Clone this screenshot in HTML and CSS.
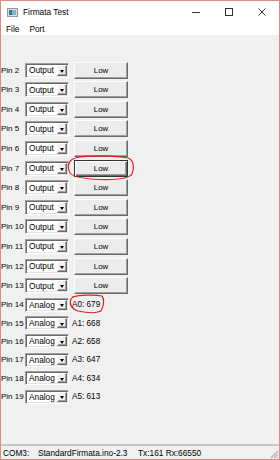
FILE: index.html
```html
<!DOCTYPE html>
<html>
<head>
<meta charset="utf-8">
<link rel="stylesheet" href="styles.css">
</head>
<body>
<div class="window">
  <div class="titlebar">
    <svg class="appicon" width="11" height="9" viewBox="0 0 11 9">
      <rect x="0.5" y="0.5" width="10" height="8" fill="#d6dfe6" stroke="#8c9aa6"/>
      <rect x="2" y="2" width="3" height="5" fill="#2f7f6e"/>
      <rect x="5" y="2" width="4" height="5" fill="#7fb1d9"/>
    </svg>
    <span class="title">Firmata Test</span>
    <div class="controls">
      <svg class="ctl" width="12" height="10" viewBox="0 0 12 10"><path d="M2 4.5H10" stroke="#333" stroke-width="1"/></svg>
      <svg class="ctl" width="12" height="10" viewBox="0 0 12 10"><rect x="2.5" y="0.5" width="7" height="7" fill="none" stroke="#333" stroke-width="1"/></svg>
      <svg class="ctl" width="12" height="10" viewBox="0 0 12 10"><path d="M2.5 0.5L9.5 7.5M9.5 0.5L2.5 7.5" stroke="#333" stroke-width="1"/></svg>
    </div>
  </div>
  <div class="menubar">
    <span class="menuitem">File</span>
    <span class="menuitem">Port</span>
  </div>
  <div class="content">
    <div class="row digital"><span class="pin">Pin 2</span><div class="select"><span class="val">Output</span><span class="arrow"></span></div><div class="button">Low</div></div>
    <div class="row digital"><span class="pin">Pin 3</span><div class="select"><span class="val">Output</span><span class="arrow"></span></div><div class="button">Low</div></div>
    <div class="row digital"><span class="pin">Pin 4</span><div class="select"><span class="val">Output</span><span class="arrow"></span></div><div class="button">Low</div></div>
    <div class="row digital"><span class="pin">Pin 5</span><div class="select"><span class="val">Output</span><span class="arrow"></span></div><div class="button">Low</div></div>
    <div class="row digital"><span class="pin">Pin 6</span><div class="select"><span class="val">Output</span><span class="arrow"></span></div><div class="button">Low</div></div>
    <div class="row digital"><span class="pin">Pin 7</span><div class="select"><span class="val">Output</span><span class="arrow"></span></div><div class="button focused">Low</div></div>
    <div class="row digital"><span class="pin">Pin 8</span><div class="select"><span class="val">Output</span><span class="arrow"></span></div><div class="button">Low</div></div>
    <div class="row digital"><span class="pin">Pin 9</span><div class="select"><span class="val">Output</span><span class="arrow"></span></div><div class="button">Low</div></div>
    <div class="row digital"><span class="pin">Pin 10</span><div class="select"><span class="val">Output</span><span class="arrow"></span></div><div class="button">Low</div></div>
    <div class="row digital"><span class="pin">Pin 11</span><div class="select"><span class="val">Output</span><span class="arrow"></span></div><div class="button">Low</div></div>
    <div class="row digital"><span class="pin">Pin 12</span><div class="select"><span class="val">Output</span><span class="arrow"></span></div><div class="button">Low</div></div>
    <div class="row digital"><span class="pin">Pin 13</span><div class="select"><span class="val">Output</span><span class="arrow"></span></div><div class="button">Low</div></div>
    <div class="row analog"><span class="pin">Pin 14</span><div class="select"><span class="val">Analog</span><span class="arrow"></span></div><span class="reading">A0: 679</span></div>
    <div class="row analog"><span class="pin">Pin 15</span><div class="select"><span class="val">Analog</span><span class="arrow"></span></div><span class="reading">A1: 668</span></div>
    <div class="row analog"><span class="pin">Pin 16</span><div class="select"><span class="val">Analog</span><span class="arrow"></span></div><span class="reading">A2: 658</span></div>
    <div class="row analog"><span class="pin">Pin 17</span><div class="select"><span class="val">Analog</span><span class="arrow"></span></div><span class="reading">A3: 647</span></div>
    <div class="row analog"><span class="pin">Pin 18</span><div class="select"><span class="val">Analog</span><span class="arrow"></span></div><span class="reading">A4: 634</span></div>
    <div class="row analog"><span class="pin">Pin 19</span><div class="select"><span class="val">Analog</span><span class="arrow"></span></div><span class="reading">A5: 613</span></div>
  </div>
  <div class="statusbar">
    <span class="panel p1">COM3:</span>
    <span class="panel p2">StandardFirmata.ino-2.3</span>
    <span class="panel p3">Tx:161 Rx:66550</span>
    <svg class="grip" width="10" height="10" viewBox="0 0 10 10">
      <path d="M9 2L2 9M9 5L5 9M9 8L8 9" stroke="#b5b5b5" stroke-width="1.2"/>
    </svg>
  </div>
  <svg class="annot" width="280" height="460" viewBox="0 0 280 460">
    <path d="M76 157.5C90 155 115 155.5 128 158C134 160 134.5 168 132 174C129 179 118 180 100 179.5C86 179 74 178 70 173C67 168 68 162 72 159.5C76 157 82 156.5 88 156" fill="none" stroke="#e0201c" stroke-width="1.2"/>
    <path d="M72 297C80 295 95 294.5 102 296C104.5 299 104 306 101 311C96 313.5 87 313 78 311C72 309 69.5 305 70.5 300C71.5 297 75 296 80 295.5" fill="none" stroke="#e0201c" stroke-width="1.2"/>
  </svg>
</div>
</body>
</html>
```

FILE: styles.css
```css
html, body {
  margin: 0;
  padding: 0;
  background: #fff;
}

body {
  font-family: "Liberation Sans", Arial, sans-serif;
  font-size: 8.2px;
  color: #000;
}

.window {
  position: relative;
  width: 280px;
  height: 460px;
  box-sizing: border-box;
  border: 1px solid #dc8c84;
  background: #f0f0f0;
  display: flex;
  flex-direction: column;
  overflow: hidden;
}

.titlebar {
  height: 21px;
  background: #fff;
  display: flex;
  align-items: center;
}

.appicon {
  margin-left: 6px;
  margin-top: 1px;
}

.title {
  margin-left: 5px;
  font-size: 8.3px;
}

.controls {
  margin-left: auto;
  display: flex;
  align-items: center;
  gap: 21px;
  margin-right: 11px;
  margin-top: 2px;
}

.ctl {
  display: block;
}

.menubar {
  height: 13px;
  background: #fff;
  display: flex;
  align-items: center;
  padding-left: 5px;
  gap: 10px;
  font-size: 8.3px;
}

.content {
  flex: 1;
  padding-top: 25.3px;
  display: flex;
  flex-direction: column;
}

.row {
  display: flex;
  align-items: center;
}

.row.digital {
  height: 19.6px;
}

.row.analog {
  height: 18.4px;
}

.pin {
  width: 24px;
  white-space: nowrap;
  font-size: 8px;
}

.select {
  width: 44px;
  height: 15px;
  box-sizing: border-box;
  background: #fff;
  border: 1px solid;
  border-color: #a0a0a0 #fff #fff #a0a0a0;
  box-shadow: inset 1px 1px 0 #696969, inset -1px -1px 0 #e3e3e3;
  display: flex;
  align-items: center;
  padding: 1px;
}

.row.analog .select {
  height: 14px;
}

.val {
  flex: 1;
  padding-left: 2px;
  font-size: 8.3px;
}

.arrow {
  width: 10px;
  height: 100%;
  box-sizing: border-box;
  background: #f0f0f0;
  border: 1px solid;
  border-color: #fff #696969 #696969 #fff;
  box-shadow: inset -1px -1px 0 #a0a0a0;
  position: relative;
}

.arrow::after {
  content: "";
  position: absolute;
  left: 2px;
  top: 4px;
  border-left: 2.5px solid transparent;
  border-right: 2.5px solid transparent;
  border-top: 3px solid #000;
}

.row.analog .arrow::after {
  top: 3.5px;
}

.button {
  margin-left: 5px;
  width: 54px;
  height: 17px;
  box-sizing: border-box;
  background: #ececec;
  border: 1px solid;
  border-color: #fff #696969 #696969 #fff;
  box-shadow: inset -1px -1px 0 #a0a0a0;
  display: flex;
  align-items: center;
  justify-content: center;
  font-size: 7.9px;
}

.button.focused {
  border-color: #333;
  box-shadow: inset 1px 1px 0 #fff, inset -1px -1px 0 #696969, inset -2px -2px 0 #a0a0a0;
}

.reading {
  margin-left: 3px;
  font-size: 8.2px;
}

.statusbar {
  height: 15px;
  box-sizing: border-box;
  border-top: 2px solid #c8c8c8;
  display: flex;
  align-items: center;
  position: relative;
  font-size: 8.3px;
}

.panel {
  white-space: nowrap;
}

.p1 {
  width: 35px;
  padding-left: 2px;
}

.p2 {
  width: 100px;
}

.grip {
  position: absolute;
  right: 0;
  bottom: 0;
}

.annot {
  position: absolute;
  left: -1px;
  top: -1px;
  pointer-events: none;
}
```
